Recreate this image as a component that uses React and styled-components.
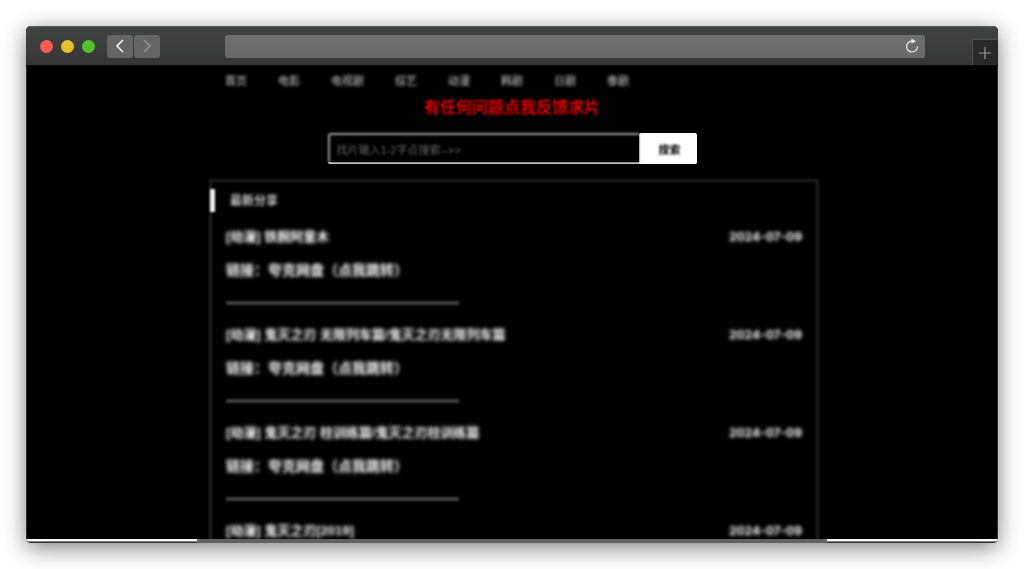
import React from "react";
import styled, { createGlobalStyle } from "styled-components";

const Global = createGlobalStyle`
  * { box-sizing: border-box; }
  body {
    margin: 0;
    background: #fff;
    font-family: "Liberation Sans", "Noto Sans CJK SC", sans-serif;
  }
  button, input { font-family: inherit; }
`;

const Desktop = styled.div`
  height: 100vh;
  padding: 26px;
  overflow: hidden;
`;

const Window = styled.div`
  display: flex;
  flex-direction: column;
  height: 100%;
  border-radius: 5px;
  box-shadow: 0 5px 22px rgba(0, 0, 0, 0.5);
  overflow: hidden;
  background: #000;
`;

const Toolbar = styled.header`
  display: flex;
  align-items: center;
  height: 40px;
  flex: none;
  padding-left: 14px;
  border-top: 1px solid #5c5e5d;
  border-bottom: 1px solid #0c0c0c;
  background: linear-gradient(#424443, #353535);
`;

const Lights = styled.div`
  display: flex;
  gap: 8px;
  margin-right: 12px;
`;

const Light = styled.span`
  width: 13px;
  height: 13px;
  border-radius: 50%;
  background: ${(p) => p.$color};
`;

const History = styled.div`
  display: flex;
  gap: 1px;
  margin-right: 65px;
`;

const NavButton = styled.button`
  display: grid;
  place-items: center;
  width: 26px;
  height: 23px;
  padding: 0;
  border: 0;
  border-radius: 3px;
  background: #656565;
  color: ${(p) => (p.disabled ? "#909090" : "#fff")};
`;

const Address = styled.div`
  display: flex;
  align-items: center;
  flex: 1;
  height: 23px;
  margin-right: 47px;
  border-radius: 3px;
  background: linear-gradient(#6f6f6f, #686868);
`;

const AddressInput = styled.input`
  flex: 1;
  min-width: 0;
  padding: 0 8px;
  border: 0;
  outline: 0;
  background: transparent;
  color: #fff;
  font-size: 12px;
`;

const Reload = styled.button`
  display: grid;
  place-items: center;
  width: 26px;
  height: 23px;
  padding: 0;
  border: 0;
  background: transparent;
  color: #eee;
`;

const NewTab = styled.button`
  display: grid;
  place-items: center;
  align-self: flex-end;
  width: 26px;
  height: 26px;
  padding: 0 1px 0 0;
  border: 0;
  border-top: 1px solid #505050;
  border-left: 1px solid #505050;
  background: #292929;
  color: #999;
`;

const Page = styled.main`
  flex: 1;
  min-height: 0;
  overflow: hidden;
  border: solid #303030;
  border-width: 0 1px;
`;

const Column = styled.div`
  display: flex;
  flex-direction: column;
  width: 630px;
  max-width: 100%;
  min-height: 100%;
  margin: 0 auto;
  padding: 5px 8px 0;
`;

const Menu = styled.nav`
  display: flex;
  gap: 31px;
  padding-left: 20px;
  filter: blur(1px) blur(1px);
`;

const MenuLink = styled.a`
  color: #d0d0d0;
  font-size: 11px;
  line-height: 20px;
  text-decoration: none;
`;

const Notice = styled.a`
  display: block;
  margin-top: 5px;
  color: #e80000;
  font-size: 16px;
  font-weight: 700;
  line-height: 24px;
  text-align: center;
  text-decoration: none;
  filter: blur(1px);
`;

const Search = styled.form`
  display: flex;
  width: 369px;
  max-width: 100%;
  height: 31px;
  margin: 13px auto 0;
  border-bottom: 2px solid #d2d5d3;
  border-radius: 2px;
`;

const SearchInput = styled.input`
  flex: 1;
  min-width: 0;
  padding: 2px 7px 0;
  border: solid #999;
  border-width: 2px 0 0 2px;
  border-radius: 3px 0 0 0;
  outline: 0;
  background: #000;
  color: #ccc;
  font-size: 11px;
  filter: blur(1px);
  &::placeholder { color: #606060; opacity: 1; }
`;

const SearchButton = styled.button`
  width: 58px;
  height: 31px;
  padding: 1px 0 0 4px;
  border: 0;
  border-radius: 2px;
  background: #fff;
  color: #000;
  font-size: 11px;
  font-weight: 700;
`;

const Soft = styled.span`
  display: block;
  filter: blur(1px);
`;

const Panel = styled.section`
  flex: 1;
  margin: 15px 0 0 4px;
  padding: 7px 14px 0;
  border: solid #1e1e1e;
  border-width: 3px 3px 0;
  filter: blur(1px);
`;

const Heading = styled.h2`
  margin: 0 0 15px -16px;
  padding-left: 15px;
  border-left: 5px solid #eee;
  color: #d0d0d0;
  font-size: 12px;
  font-weight: 700;
  line-height: 23px;
`;

const HeadingText = styled(Soft)`
  padding-top: 2px;
  line-height: 21px;
`;

const Entry = styled.article`
  color: #fff;
  font-weight: 700;
`;

const EntryTop = styled.div`
  display: flex;
  justify-content: space-between;
  line-height: 20px;
  filter: blur(1px) blur(1px);
`;

const EntryTitle = styled.h3`
  margin: 0;
  font-size: 13px;
`;

const EntryDate = styled.time`
  font-family: Inter, sans-serif;
  font-size: 12px;
`;

const EntryLink = styled.a`
  display: block;
  margin-top: 13px;
  color: inherit;
  font-size: 14px;
  line-height: 20px;
  text-decoration: none;
  filter: blur(1px) blur(1px);
`;

const Rule = styled.hr`
  width: 233px;
  height: 4px;
  margin: 21px 0 20px;
  border: 0;
  background: #404040;
`;

const Base = styled.footer`
  display: flex;
  flex: none;
  height: 4px;
`;

const BaseEdge = styled.span`
  flex: 1;
  border-top: 2px solid #fff;
  border-bottom: 1px solid #303030;
  background: #858585;
`;

const BaseMiddle = styled.span`
  width: 630px;
  background: #626262;
`;

const menu = ["首页", "电影", "电视剧", "综艺", "动漫", "韩剧", "日剧", "泰剧"];

const entries = [
  { title: "[动漫] 铁腕阿童木", link: true },
  { title: "[动漫] 鬼灭之刃 无限列车篇/鬼灭之刃无限列车篇", link: true },
  { title: "[动漫] 鬼灭之刃 柱训练篇/鬼灭之刃柱训练篇", link: true },
  { title: "[动漫] 鬼灭之刃[2019]", link: false },
];

const Chevron = ({ d }) => (
  <svg width="10" height="14" viewBox="0 0 10 14" fill="none" stroke="currentColor" strokeWidth="1.5">
    <path d={d} />
  </svg>
);

export default function App() {
  return (
    <Desktop>
      <Global />
      <Window>
        <Toolbar>
          <Lights>
            <Light $color="#ff5b52" />
            <Light $color="#e6c029" />
            <Light $color="#53c22b" />
          </Lights>
          <History>
            <NavButton aria-label="Back"><Chevron d="M8 1 2 7l6 6" /></NavButton>
            <NavButton aria-label="Forward" disabled><Chevron d="m2 1 6 6-6 6" /></NavButton>
          </History>
          <Address>
            <AddressInput aria-label="Address" />
            <Reload aria-label="Reload">
              <svg width="14" height="16" viewBox="0 0 14 16" fill="none" stroke="currentColor" strokeWidth="1.2">
                <path d="M7.5 3.2A5.4 5.4 0 1 0 12.4 8.4" />
                <path d="M6.5.6 11 3.2 6.5 5.8z" fill="currentColor" stroke="none" />
              </svg>
            </Reload>
          </Address>
          <NewTab aria-label="New tab">
            <svg width="12" height="12" viewBox="0 0 12 12" stroke="currentColor" strokeWidth="1.2">
              <path d="M6 0v12M0 6h12" />
            </svg>
          </NewTab>
        </Toolbar>
        <Page>
          <Column>
            <Menu>
              {menu.map((m) => <MenuLink href="#" key={m}>{m}</MenuLink>)}
            </Menu>
            <Notice href="#">有任何问题点我反馈求片</Notice>
            <Search>
              <SearchInput aria-label="搜索" placeholder="找片输入1-2字点搜索-->>" />
              <SearchButton type="button"><Soft>搜索</Soft></SearchButton>
            </Search>
            <Panel>
              <Heading><HeadingText>最新分享</HeadingText></Heading>
              {entries.map(({ title, link }) => (
                <Entry key={title}>
                  <EntryTop>
                    <EntryTitle>{title}</EntryTitle>
                    <EntryDate dateTime="2024-07-09">2024-07-09</EntryDate>
                  </EntryTop>
                  {link && (
                    <>
                      <EntryLink href="#">链接：夸克网盘（点我跳转）</EntryLink>
                      <Rule />
                    </>
                  )}
                </Entry>
              ))}
            </Panel>
          </Column>
        </Page>
        <Base>
          <BaseEdge />
          <BaseMiddle />
          <BaseEdge />
        </Base>
      </Window>
    </Desktop>
  );
}
